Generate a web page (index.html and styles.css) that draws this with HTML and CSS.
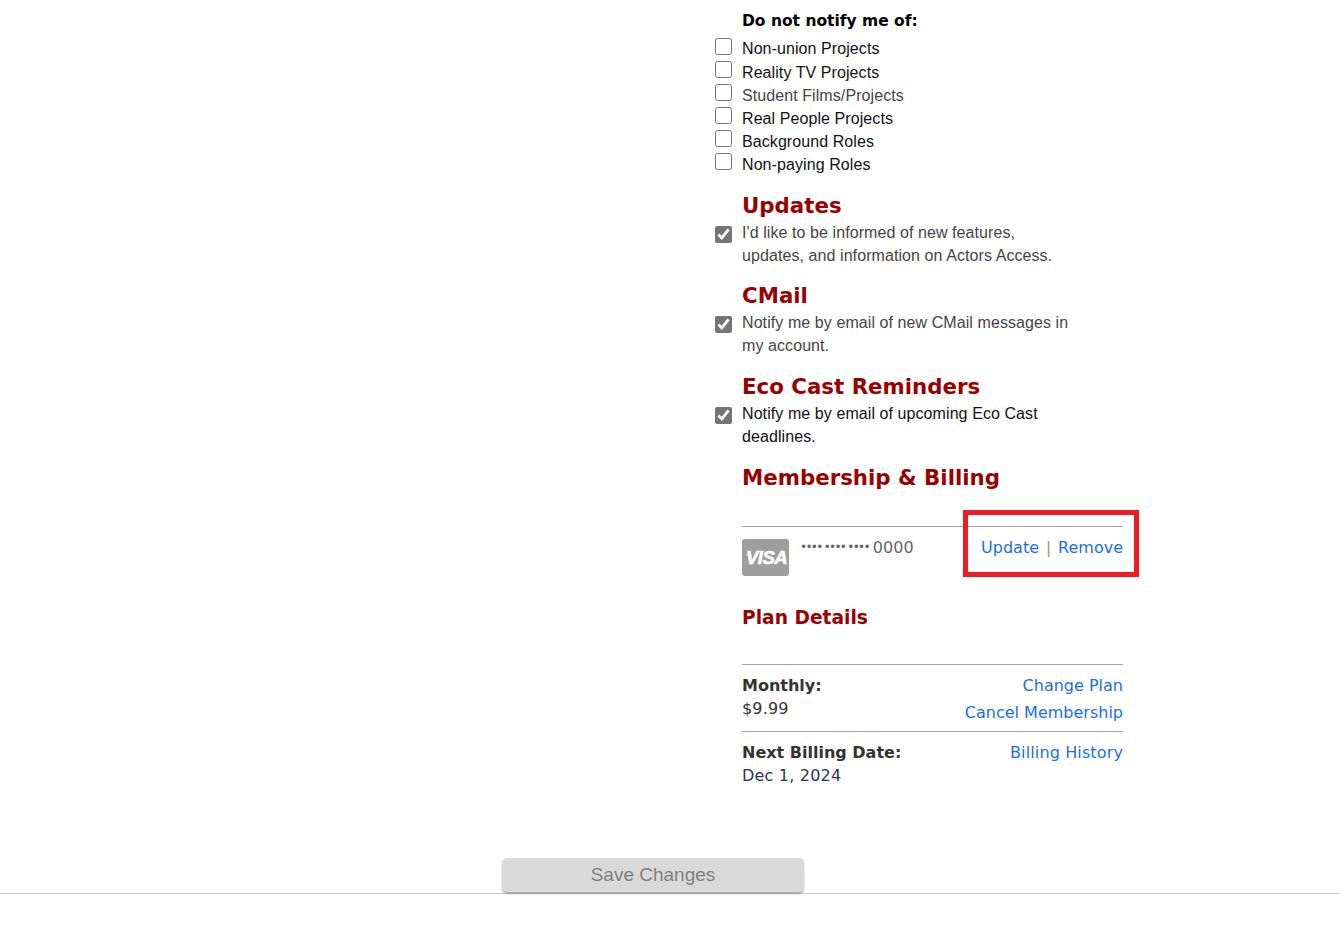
FILE: index.html
```html
<!DOCTYPE html>
<html lang="en">
<head>
<meta charset="utf-8">
<title>Account settings</title>
<link rel="stylesheet" href="styles.css">
</head>
<body>
<main class="page">
  <section class="column">
    <h4 class="sub-title">Do not notify me of:</h4>
    <ul class="opt-list">
      <li class="opt"><input class="box" type="checkbox"><span>Non-union Projects</span></li>
      <li class="opt"><input class="box" type="checkbox"><span>Reality TV Projects</span></li>
      <li class="opt dim"><input class="box" type="checkbox"><span>Student Films/Projects</span></li>
      <li class="opt"><input class="box" type="checkbox"><span>Real People Projects</span></li>
      <li class="opt"><input class="box" type="checkbox"><span>Background Roles</span></li>
      <li class="opt"><input class="box" type="checkbox"><span>Non-paying Roles</span></li>
    </ul>

    <h2 class="heading heading-updates">Updates</h2>
    <div class="para dim"><input class="box" type="checkbox" checked><p>I'd like to be informed of new features,<br>updates, and information on Actors Access.</p></div>

    <h2 class="heading heading-cmail">CMail</h2>
    <div class="para dim"><input class="box" type="checkbox" checked><p>Notify me by email of new CMail messages in<br>my account.</p></div>

    <h2 class="heading heading-eco">Eco Cast Reminders</h2>
    <div class="para"><input class="box" type="checkbox" checked><p>Notify me by email of upcoming Eco Cast<br>deadlines.</p></div>

    <h2 class="heading heading-member">Membership &amp; Billing</h2>
    <div class="card-row">
      <div class="card-info">
        <svg class="visa" width="47" height="37" viewBox="0 0 47 37" aria-hidden="true">
          <rect width="47" height="37" rx="3" fill="#9e9e9e"/>
          <path class="visa-flare" d="M3 15.5h6l1 3z"/>
          <text x="24.5" y="25" text-anchor="middle" class="visa-text">VISA</text>
        </svg>
        <span class="dots">•••• •••• ••••</span><span class="last4">0000</span>
      </div>
      <div class="links"><a href="#">Update</a><span class="sep">|</span><a href="#">Remove</a></div>
      <div class="highlight"></div>
    </div>

    <h3 class="plan-title">Plan Details</h3>
    <div class="bill-row bill-monthly">
      <div class="bill-left"><strong>Monthly:</strong><span class="amount">$9.99</span></div>
      <div class="bill-right"><a href="#">Change Plan</a><a href="#">Cancel Membership</a></div>
    </div>
    <div class="bill-row bill-next">
      <div class="bill-left"><strong>Next Billing Date:</strong><span class="date">Dec 1, 2024</span></div>
      <div class="bill-right"><a class="history" href="#">Billing History</a></div>
    </div>
  </section>
  <div class="save-wrap"><button class="save" type="button" disabled>Save Changes</button></div>
</main>
</body>
</html>
```
FILE: styles.css
```css
html, body { margin: 0; padding: 0; background: #fff; }
body { height: 937px; overflow: hidden; font-family: "Liberation Sans", Arial, sans-serif; color: #111; }
.page { display: flex; flex-direction: column; }
.column { width: 408px; margin-left: 715px; padding-top: 11px; box-sizing: border-box; }
.sub-title { margin: 0 0 0 27px; font: bold 15.5px/20px "DejaVu Sans", sans-serif; color: #000; }
.opt-list { list-style: none; margin: 6px 0 0; padding: 0; }
.opt { display: flex; height: 23px; font-size: 16px; line-height: 23px; letter-spacing: .08px; color: #111; }
.opt span { position: relative; top: 1px; }
.opt:first-child span { top: 0; }
.dim { color: #444; }
.opt.dim { color: #444; }
.box { width: 17px; height: 17px; margin: 1px 10px 0 0; flex: none; accent-color: #757575; }
.heading { margin: 0 0 0 27px; padding-bottom: 1px; font: bold 21.33px/29px "DejaVu Sans", sans-serif; color: #990000; }
.heading-updates { margin-top: 16px; }
.heading-cmail { margin-top: 14px; }
.heading-eco { margin-top: 15px; }
.heading-member { margin-top: 15px; }
.para { display: flex; align-items: flex-start; font-size: 16px; line-height: 23px; letter-spacing: .08px; }
.para .box { margin-top: 5px; }
.para p { margin: 0; }
.card-row { position: relative; display: flex; justify-content: space-between; margin: 33px 0 0 27px; border-top: 1px solid #a3a3a3; height: 50px; }
.card-info { display: flex; align-items: flex-start; padding-top: 12px; color: #666; }
.visa { flex: none; margin-right: 11px; }
.visa-flare { fill: #fff; }
.visa-text { font: italic bold 18.5px "Liberation Sans", sans-serif; fill: #fff; stroke: #fff; stroke-width: .6px; letter-spacing: -.6px; }
.dots { font: 12px/16px "DejaVu Sans", sans-serif; letter-spacing: -1.7px; margin-right: 4px; }
.last4 { font: 16px/18px "DejaVu Sans", sans-serif; letter-spacing: .1px; }
.links { display: flex; padding-top: 11px; font: 16px/20px "DejaVu Sans", sans-serif; }
a { color: #1a6fe6; text-decoration: none; }
.sep { margin: 0 7px; color: #8a8a9a; font-size: 15px; }
.highlight { position: absolute; left: 221px; top: -17px; width: 166px; height: 57px; border: 5px solid #ed1c24; }
.plan-title { margin: 29px 0 0 27px; font: bold 18.67px/24px "DejaVu Sans", sans-serif; color: #990000; }
.bill-row { display: flex; justify-content: space-between; margin-left: 27px; border-top: 1px solid #a3a3a3; font: 16px/23px "DejaVu Sans", sans-serif; color: #333; }
.bill-monthly { margin-top: 34px; height: 67px; padding-top: 9px; box-sizing: border-box; }
.bill-next { height: 66px; padding-top: 9px; box-sizing: border-box; }
.bill-left, .bill-right { display: flex; flex-direction: column; }
.bill-right { align-items: flex-end; gap: 4px; }
.amount { letter-spacing: .15px; }
.date { color: #2f3350; letter-spacing: .2px; }
.history { letter-spacing: .13px; }
.save-wrap { margin-top: 61px; height: 35px; border-bottom: 1px solid #ccc; padding-left: 502px; }
.save { display: block; width: 302px; height: 34px; border: 0; border-radius: 5px; background: #d9d9d9; color: #808080; font: 19px "Liberation Sans", sans-serif; box-shadow: 0 2px 3px -1px rgba(0,0,0,.5); padding: 0; }
```
